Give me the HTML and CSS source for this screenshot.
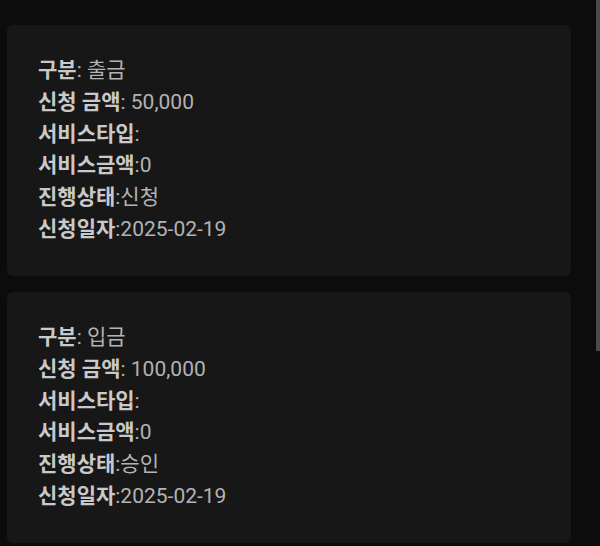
FILE: index.html
```html
<!DOCTYPE html>
<html lang="ko">
<head>
<meta charset="utf-8">
<link rel="stylesheet" href="styles.css">
</head>
<body>
<main class="list">
  <section class="card">
    <div class="row"><b>구분</b>: 출금</div>
    <div class="row"><b>신청 금액</b>: 50,000</div>
    <div class="row"><b>서비스타입</b>:</div>
    <div class="row"><b>서비스금액</b>:0</div>
    <div class="row"><b>진행상태</b>:신청</div>
    <div class="row"><b>신청일자</b>:2025-02-19</div>
  </section>
  <section class="card">
    <div class="row"><b>구분</b>: 입금</div>
    <div class="row"><b>신청 금액</b>: 100,000</div>
    <div class="row"><b>서비스타입</b>:</div>
    <div class="row"><b>서비스금액</b>:0</div>
    <div class="row"><b>진행상태</b>:승인</div>
    <div class="row"><b>신청일자</b>:2025-02-19</div>
  </section>
</main>
<div class="scrollbar"></div>
</body>
</html>
```
FILE: styles.css
```css
html, body {
  margin: 0;
  padding: 0;
  height: 546px;
  overflow: hidden;
  background: #0c0c0c;
}
body {
  font-family: Roboto, "Noto Sans CJK KR", sans-serif;
  font-size: 21px;
  color: #b3b3b3;
}
.list {
  display: flex;
  flex-direction: column;
  gap: 16px;
  padding: 25px 0 0 7px;
  width: 564px;
}
.card {
  background: #171717;
  border-radius: 6px;
  padding: 30px 31px;
  height: 191px;
}
.row {
  line-height: 31.8px;
  white-space: nowrap;
}
.row b {
  font-weight: 700;
  color: #c9c9c9;
}
.scrollbar {
  position: fixed;
  top: 0;
  right: 0;
  width: 4px;
  height: 351px;
  background: #4a4a4a;
}
```
